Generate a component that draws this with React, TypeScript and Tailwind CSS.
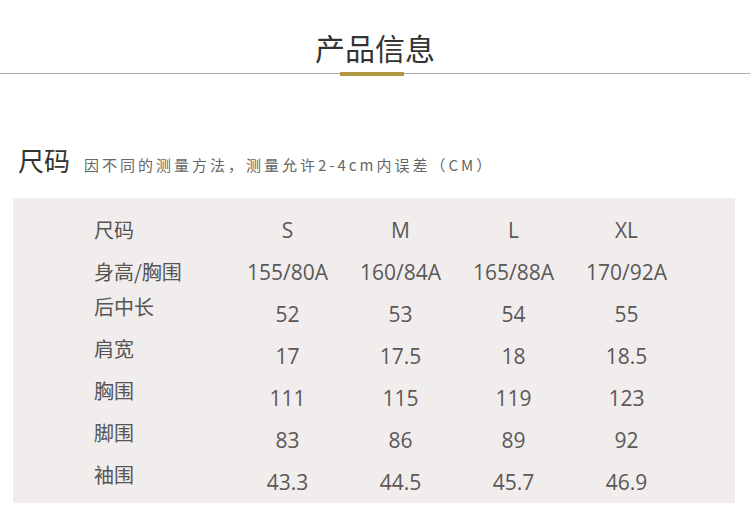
const rows = [
  { label: "尺码", values: ["S", "M", "L", "XL"], shift: false },
  { label: "身高/胸围", values: ["155/80A", "160/84A", "165/88A", "170/92A"], shift: false },
  { label: "后中长", values: ["52", "53", "54", "55"], shift: true },
  { label: "肩宽", values: ["17", "17.5", "18", "18.5"], shift: true },
  { label: "胸围", values: ["111", "115", "119", "123"], shift: true },
  { label: "脚围", values: ["83", "86", "89", "92"], shift: true },
  { label: "袖围", values: ["43.3", "44.5", "45.7", "46.9"], shift: true },
];

const cjk = { fontFamily: '"Noto Sans CJK SC", sans-serif' };
const latin = { fontFamily: '"Open Sans", "Noto Sans CJK SC", sans-serif' };

export default function App() {
  return (
    <div className="w-[750px] h-[520px] bg-white overflow-hidden" style={cjk}>
      <h1 className="pt-[32px] text-center text-[30px] leading-[30px] font-normal text-[#333]">产品信息</h1>
      <div className="mt-[11px] h-px bg-[#a9a9a9] flex justify-center items-center">
        <div className="w-16 h-[4px] shrink-0 mr-[6px] bg-[#b1973d]" />
      </div>

      <div className="mt-[73px] pl-[18px] flex items-baseline">
        <span className="text-[26px] leading-[26px] text-[#333]">尺码</span>
        <span className="ml-[14px] text-[15px] tracking-[3px] text-[#666]">
          因不同的测量方法，测量允许2-4cm内误差（CM）
        </span>
      </div>

      <div className="mt-[21px] mx-[13px] w-[722px] h-[305px] bg-[#f1eded] pt-[11px] pl-[81px]">
        {rows.map((row) => (
          <div key={row.label} className="flex items-center h-[42px]">
            <div className={`w-[137px] text-[20px] leading-[22px] text-[#555] ${row.shift ? "mb-[14px]" : ""}`}>
              {row.label}
            </div>
            {row.values.map((v) => (
              <div key={v} className="w-[113px] text-center text-[21px] leading-[22px] text-[#5a5858]" style={latin}>
                {v}
              </div>
            ))}
          </div>
        ))}
      </div>
    </div>
  );
}
